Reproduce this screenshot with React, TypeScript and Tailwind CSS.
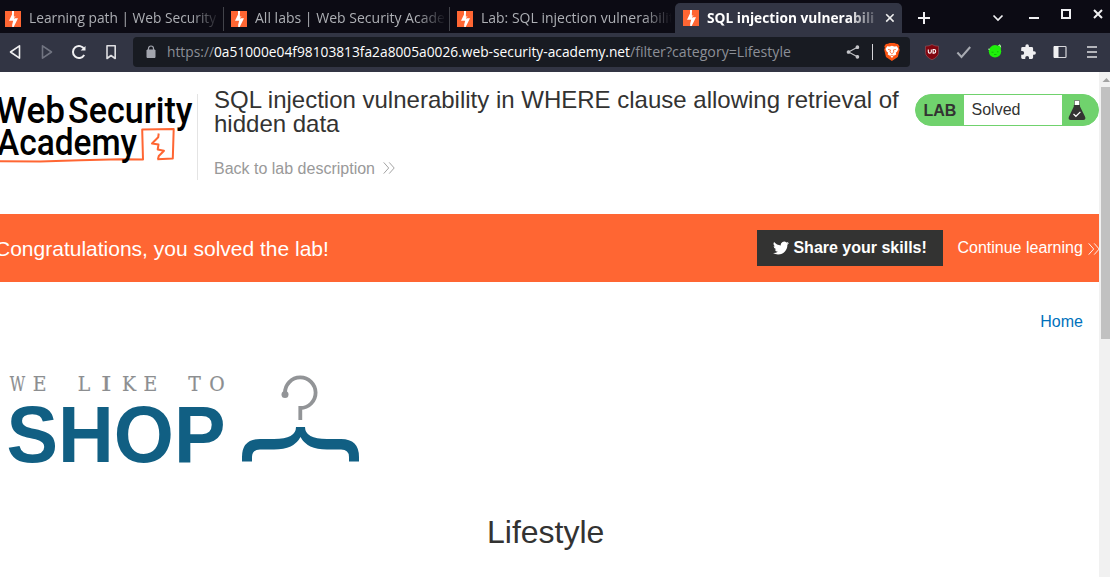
import type { ReactNode } from "react";

const uiFont = "font-['Open_Sans','Noto_Sans',sans-serif]";

function Bolt() {
  return (
    <svg className="size-4 shrink-0" viewBox="0 0 16 16">
      <rect width="16" height="16" fill="#ff6633" />
      <path d="M7 0h2v5h2L9 7.300h4L8.700 16H7.200v-2.500l1-3.700H4L7 3.500Z" fill="#fff" />
      <path d="M9.300 2.500v3h2.200L9 7.500" fill="none" stroke="#ff6633" strokeWidth=".6" />
    </svg>
  );
}

function TabText({ children, width, active = false }: { children: string; width: number; active?: boolean }) {
  return (
    <svg
      className={`h-8 w-[191px] shrink-0 overflow-hidden ${
        active
          ? "[mask-image:linear-gradient(to_right,black_74%,transparent_91%)]"
          : "[mask-image:linear-gradient(to_right,black_85%,transparent_100%)]"
      }`}
    >
      <text
        x="0"
        y={active ? 23 : 22}
        textLength={width}
        lengthAdjust="spacingAndGlyphs"
        className={active ? "fill-white text-[14.5px] font-bold" : "fill-[#adafb4] text-[14.5px]"}
      >
        {children}
      </text>
    </svg>
  );
}

function Tab({ children, width, divider = true }: { children: string; width: number; divider?: boolean }) {
  return (
    <div className="flex h-8 w-[226px] shrink-0 items-center gap-2 pl-[5px] pt-1">
      <Bolt />
      <div className="-mt-1 h-8 w-[191px]">
        <TabText width={width}>{children}</TabText>
      </div>
      <span className={`h-6 w-px shrink-0 -translate-x-[5px] ${divider ? "bg-[#42434a]" : "bg-transparent"}`} />
    </div>
  );
}

function TabStrip() {
  return (
    <div className="flex h-[33px] bg-[#0c0b14]">
      <div className="flex w-[675px] pt-px">
        <Tab width={206}>Learning path | Web Security Ac</Tab>
        <Tab width={210}>All labs | Web Security Academy</Tab>
        <Tab width={207} divider={false}>Lab: SQL injection vulnerability i</Tab>
      </div>
      <div className="mt-[3px] flex h-[30px] w-[227px] items-center gap-2 overflow-hidden rounded-t-[5px] bg-[#323544] pl-2">
        <Bolt />
        <div className="-mt-[5px] h-8 w-[167px] overflow-hidden">
          <TabText active width={181}>SQL injection vulnerability</TabText>
        </div>
        <svg className="-ml-[1px] size-[18px] shrink-0" viewBox="0 0 18 18" stroke="#eee" strokeWidth="1.6">
          <path d="m5.200 5.200 7.400 7.400m0-7.400-7.400 7.400" />
        </svg>
      </div>
      <svg className="h-[33px] w-[208px]" viewBox="902 0 208 33" fill="none" stroke="#f0f0f2">
        <path d="M924 12v12m-6-6h12" strokeWidth="2" />
        <path d="m993.500 15.500 4.500 4.500 4.500-4.500" strokeWidth="1.700" />
        <path d="M1029 18h10" strokeWidth="2" />
        <path d="M1062 10h8v8h-8Z" strokeWidth="2" />
        <path d="m1094 10 8 8m0-8-8 8" strokeWidth="2" />
      </svg>
    </div>
  );
}

function Toolbar() {
  return (
    <div className="flex h-[39px] bg-[#323544]">
      <svg className="h-[39px] w-[133px]" viewBox="0 33 133 39" fill="none" strokeWidth="1.6" strokeLinejoin="round">
        <path d="m10.5 52 9-6.2v12.4Z" stroke="#f0f0f2" />
        <path d="m51.5 52-9-6.2v12.4Z" stroke="#717481" />
        <path d="M84.3 49.2A6 6 0 1 0 84.2 55" stroke="#f0f0f2" strokeWidth="2" />
        <path d="M85.5 46v4.5H80.6Z" fill="#f0f0f2" />
        <path d="M107 45.8h8.2v12.7L111 55.5l-4 3Z" stroke="#dedee2" />
      </svg>
      <div className="mt-1 flex h-[30px] w-[777px] items-center rounded bg-[#181b22]">
        <svg className="ml-[13px] h-4 w-[10px]" viewBox="0 0 10 16">
          <path d="M1 6h8v7.5H1Z" fill="#a2a5ae" stroke="#a2a5ae" strokeWidth="1" strokeLinejoin="round" />
          <path d="M2.5 6V4.5a2.5 2.5 0 0 1 5 0V6" fill="none" stroke="#a2a5ae" strokeWidth="1.2" />
        </svg>
        <svg className="ml-[11px] h-[30px] w-[640px] text-[14px]">
          <text y="20" x="0" fill="#8c8f97" textLength="47" lengthAdjust="spacingAndGlyphs">https://</text>
          <text y="20" x="47" fill="#fff" textLength="416" lengthAdjust="spacingAndGlyphs">0a51000e04f98103813fa2a8005a0026.web-security-academy.net</text>
          <text y="20" x="463" fill="#8c8f97" textLength="161" lengthAdjust="spacingAndGlyphs">/filter?category=Lifestyle</text>
        </svg>
        <svg className="h-[30px] w-[103px]" viewBox="807 37 103 30">
          <g fill="#c5c6ca" stroke="#c5c6ca" strokeWidth="1.1">
            <path d="M857.4 47.2 848.5 52l8.9 4.8" fill="none" />
            <circle cx="857.4" cy="47.2" r="1.3" />
            <circle cx="848.5" cy="52" r="1.3" />
            <circle cx="857.4" cy="56.8" r="1.3" />
          </g>
          <path d="M872.5 44v16" stroke="#d5d5d9" />
          <path d="m888 43.8 1.5-.8h5l1.6.8 1.8.1 1.6 2.400-.5 1.500.7 2-1.900 7.200-5.900 4.100-5.900-4.100-1.800-7.200.7-2-.6-1.500 1.600-2.400Z" fill="#fb5413" />
          <path d="m887.2 46.200 2.500.4 2.200-.8 2.400.8 2.500-.4 1.700 2.700-1.700 3-1 .5.4 2-2.400 1.300-1.800 2.400-2-2.400-2.300-1.300.4-2-1.100-.5-1.500-3Z" fill="#fff" />
          <path d="m888 49.400 2.600.6-.7 2 2 1.800 2-1.800-.6-2 2.600-.6M890 56.200l1.900-.9 2 .9" fill="none" stroke="#fb5413" strokeWidth=".7" />
        </svg>
      </div>
      <svg className="h-[39px] w-[200px]" viewBox="910 33 200 39">
        <path d="M932 44.500q2.500 1.700 6.500 1.700v6.300q0 4.300-6.500 7.300-6.500-3-6.500-7.300v-6.300q4 0 6.500-1.700Z" fill="#800610" stroke="#9a565d" strokeWidth=".6" />
        <path d="M928.300 49.500v2.200q0 1.400 1.500 1.400t1.500-1.400v-2.200m1.800 0v3.600h1q1.600 0 1.600-1.800t-1.600-1.800Z" fill="none" stroke="#fff" strokeWidth="1.1" />
        <path d="m957.400 52.500 4.100 4.500 8.700-10" fill="none" stroke="#a8abb2" strokeWidth="2" />
        <circle cx="995" cy="51.300" r="6.200" fill="#1ff00a" />
        <path d="m998 45.500 2.500-.7.500 5-2-1ZM988.300 49.500l3-1-1 3.500Z" fill="#1ff00a" />
        <path d="M991.500 52.200h2m3.500-.4h1.500m-4.500 2.700h2.500" stroke="#0aae0a" strokeWidth=".8" />
        <path d="m998.500 45.500 1.300-.7.900 2.500M989 48.500v1.500" fill="none" stroke="#e5ffdf" strokeWidth=".8" />
        <path transform="translate(1019.8 43.5) scale(.7)" d="M20.5 11H19V7a2 2 0 0 0-2-2h-4V3.500a2.500 2.500 0 0 0-5 0V5H4a2 2 0 0 0-2 2v3.800h1.500a2.700 2.700 0 0 1 0 5.400H2V20a2 2 0 0 0 2 2h3.800v-1.500a2.700 2.700 0 0 1 5.400 0V22H17a2 2 0 0 0 2-2v-4h1.500a2.500 2.500 0 0 0 0-5Z" fill="#efeff1" />
        <rect x="1054" y="46.500" width="12" height="11" rx=".8" fill="none" stroke="#d8d8dc" strokeWidth="1.2" />
        <path d="M1054 46h4.500v12H1054Z" fill="#f0f0f2" />
        <path d="M1087 47h10m-10 5h10m-10 5h10" stroke="#dedee1" strokeWidth="1.6" />
      </svg>
    </div>
  );
}

function AcademyLogo() {
  return (
    <svg className="h-[86px] w-[197px] shrink-0 font-['Roboto',sans-serif] font-medium" viewBox="0 94 197 86">
      <text x="-4" y="123" fontSize="37.500" textLength="69" lengthAdjust="spacingAndGlyphs">Web</text>
      <text x="68" y="123" fontSize="37.500" textLength="124.500" lengthAdjust="spacingAndGlyphs">Security</text>
      <path d="M0 161.200 40 161.500 80 160.300l40-1 23 .2-.8-29.900 31.500-.6-.9 29.400-15.500.8" fill="none" stroke="#ff6633" strokeWidth="2" strokeLinejoin="round" />
      <path d="m158.700 133.500-.5 3.800-6.200 6.200 6.500 1-.8 5 6.300 1.300-5.200 5.200-.8 3" fill="none" stroke="#ff6633" strokeWidth="2" strokeLinejoin="round" />
      <text x="-3" y="155" fontSize="36.500" textLength="140" lengthAdjust="spacingAndGlyphs">Academy</text>
    </svg>
  );
}

function Chevrons({ className }: { className: string }) {
  return (
    <svg className={`h-3 w-3 shrink-0 ${className}`} viewBox="0 0 12 12" fill="none" stroke="currentColor" strokeWidth=".9">
      <path d="m.7.4 5 5.600-5 5.600M6.200.4l5 5.600-5 5.600" />
    </svg>
  );
}

function ShopLogo() {
  const letters = [
    ["W", 17.5], ["E", 39.7], ["L", 84], ["I", 106.2], ["K", 129], ["E", 150.5], ["T", 194.5], ["O", 217],
  ] as const;
  return (
    <svg className="ml-2 h-[92px] w-[353px]" viewBox="8 372 353 92">
      <g className="font-['DejaVu_Serif',serif]" fill="#8c8e90" stroke="#8c8e90" strokeWidth=".2" fontSize="20.5" textAnchor="middle">
        {letters.map(([letter, x]) => (
          <text key={x} transform={`translate(${x} 391.3) scale(${letter === "W" ? 0.73 : letter === "I" ? 1.3 : 0.92} 1)`}>{letter}</text>
        ))}
      </g>
      <text x="6.500" y="461.600" fontSize="79" textLength="219" lengthAdjust="spacingAndGlyphs" fill="#115f83" className="font-['Liberation_Sans',sans-serif] font-bold">SHOP</text>
      <path d="M285 394.500V393A15.300 15.300 0 1 1 300.300 408V420" fill="none" stroke="#929497" strokeWidth="3.800" />
      <circle cx="285" cy="394.500" r="3.500" fill="#929497" />
      <path d="M242 461.500V457q0-18 18-18h14q22 0 22-12h9q0 12 22 12h14q18 0 18 18v4.500h-10V457q0-7.500-8-7.500h-14q-20 0-26.500-12.500Q294 449.500 274 449.500h-14q-8 0-8 7.500v4.500Z" fill="#115f83" />
    </svg>
  );
}

function ShareButton({ children }: { children: ReactNode }) {
  return <div className="flex h-9 w-[186px] shrink-0 items-center gap-1 bg-[#333332] pl-4 font-bold">{children}</div>;
}

export default function App() {
  return (
    <div className="flex h-[577px] w-[1110px] flex-col overflow-hidden bg-white font-['Liberation_Sans',Arial,sans-serif] text-base text-[#333332]">
      <div className={uiFont}>
        <TabStrip />
        <Toolbar />
      </div>
      <div className="flex h-[505px]">
        <main className="h-full w-[1099px] overflow-hidden">
          <header className="flex h-[142px] items-start pt-[22px]">
            <AcademyLogo />
            <div className="h-[86px] w-px shrink-0 bg-[#e4e4e4]" />
            <div className="-mt-[6px] ml-4 w-[701px] shrink-0">
              <h1 className="text-[24px] leading-6">SQL injection vulnerability in WHERE clause allowing retrieval of<br />hidden data</h1>
              <div className="mt-6 flex items-center gap-2 leading-[18px] text-[#999]">
                <span>Back to lab description</span>
                <Chevrons className="-mt-0.5" />
              </div>
            </div>
            <div className="flex h-8 w-[184px] shrink-0 overflow-hidden rounded-full border border-[#70d26d] bg-[#70d26d] leading-[31px]">
              <b className="w-12 pl-[7.5px]">LAB</b>
              <span className="w-[98px] bg-white pl-[7.5px] leading-[29px]">Solved</span>
              <svg className="h-[30px] w-[36px]" viewBox="1062 95 36 30">
                <path d="M1073.800 105v1.500l-5 10.500q-.8 3 2 3h12.400q2.800 0 2-3l-5.200-10.500V105Z" fill="#333332" />
                <path d="M1075 101h4v4h-4Z" fill="#fff" />
                <path d="M1074 100.500h6m-5.500.5v4m5-4v4" stroke="#777" strokeWidth=".8" />
                <path d="m1073.500 114 2.400 2.300 4.500-4.400" fill="none" stroke="#fff" strokeWidth="1.2" />
              </svg>
            </div>
          </header>
          <section className="flex h-[68px] items-center bg-[#ff6633] text-white">
            <div className="-ml-[5px] mt-px w-[762px] shrink-0 text-[21px]">Congratulations, you solved the lab!</div>
            <ShareButton>
              <svg className="h-4 w-4 shrink-0" viewBox="0 0 24 24" fill="#fff">
                <path d="M23.950 4.570a10 10 0 0 1-2.820.775 4.960 4.960 0 0 0 2.160-2.720c-.95.550-2.010.960-3.130 1.180a4.920 4.920 0 0 0-8.380 4.480C7.690 8.090 4.070 6.130 1.640 3.160a4.920 4.920 0 0 0 1.520 6.570 4.900 4.900 0 0 1-2.230-.610v.060a4.920 4.920 0 0 0 3.950 4.820 5 5 0 0 1-2.210.080 4.940 4.940 0 0 0 4.600 3.420A9.870 9.870 0 0 1 0 19.540a14 14 0 0 0 7.550 2.210c9.050 0 14-7.500 14-13.980 0-.210 0-.420-.015-.630a9.940 9.940 0 0 0 2.460-2.550Z" />
              </svg>
              <span className="ml-[0.45px]">Share your skills!</span>
            </ShareButton>
            <span className="ml-[14.45px] shrink-0">Continue learning</span>
            <Chevrons className="ml-[5px] mt-px" />
          </section>
          <nav className="mt-[31px] flex h-[18px] justify-end pr-4 leading-[18px] text-[#0071bc]">Home</nav>
          <div className="mt-[41px]"><ShopLogo /></div>
          <h2 className="mt-[50px] pl-[487px] text-[32px] leading-9">Lifestyle</h2>
        </main>
        <div className="flex w-[11px] flex-col bg-[#f1f1f1]">
          <svg className="ml-0.5 h-[15px] w-[9px]" viewBox="0 0 9 15"><path d="m1.500 10 4-4 3.500 4Z" fill="#a3a3a3" /></svg>
          <div className="ml-0.5 h-[252px] bg-[#c1c1c1]" />
        </div>
      </div>
    </div>
  );
}
